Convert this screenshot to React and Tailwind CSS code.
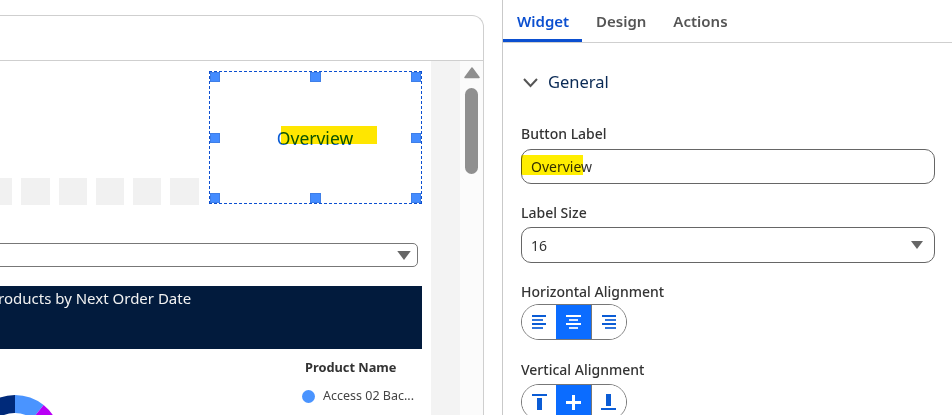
const font = { fontFamily: '"Noto Sans", "Open Sans", sans-serif' };

function Handle({ className }) {
  return <span className={`absolute h-[10px] bg-[#448cff] border border-[#3f7fe8] ${className}`} />;
}

function Caret({ className }) {
  return (
    <svg className={className} viewBox="0 0 12 8" width="12" height="8">
      <path d="M0 0H12L6 8Z" fill="#666" />
    </svg>
  );
}

function AlignIcon({ rows, color }) {
  return (
    <svg width="15" height="14" viewBox="0 0 15 14">
      {rows.map(([x, y, w], i) => (
        <rect key={i} x={x} y={y} width={w} height="2" fill={color} opacity={i % 2 ? 0.85 : 1} />
      ))}
    </svg>
  );
}

function Segmented({ children }) {
  return (
    <div className="flex w-[106px] h-[36px] rounded-full border border-[#777] overflow-hidden">
      {children}
    </div>
  );
}

function Seg({ active, border, children }) {
  return (
    <div className={`flex-1 flex items-center justify-center ${active ? 'bg-[#0b6cff]' : 'bg-white'} ${border ? 'border-l border-[#777]' : ''}`}>
      {children}
    </div>
  );
}

export default function App() {
  return (
    <div className="flex w-[952px] h-[415px] overflow-hidden bg-white" style={font}>
      {/* builder canvas */}
      <div className="w-[503px] h-full shrink-0 border-r border-[#c9c9c9] pt-[15px] pr-[18px]">
        <div className="h-[440px] border-t border-r border-[#cfcfcf] rounded-tr-xl">
          <div className="h-[45px] border-b border-[#cfcfcf]" />
          <div className="flex h-full">
            <div className="w-[431px] shrink-0 overflow-hidden pt-[10px]">
              <div className="flex justify-end items-end gap-[10px] pr-[9px]">
                <div className="flex gap-[9px] mb-[-1px]">
                  {[29, 29, 28, 28, 28, 29].map((w, i) => (
                    <div key={i} className="h-[27px] bg-[#f1f1f1] shrink-0" style={{ width: w }} />
                  ))}
                </div>
                <div className="relative w-[213px] h-[133px] shrink-0 border border-dashed border-[#0b4fd0] flex items-center justify-center">
                  <Handle className="w-[10px] left-0 top-0" />
                  <Handle className="w-[11px] left-[100px] top-0" />
                  <Handle className="w-[10px] right-0 top-0" />
                  <Handle className="w-[10px] left-0 top-[61px]" />
                  <Handle className="w-[10px] right-0 top-[61px]" />
                  <Handle className="w-[10px] left-0 bottom-0" />
                  <Handle className="w-[11px] left-[100px] bottom-0" />
                  <Handle className="w-[10px] right-0 bottom-0" />
                  <span className="text-[17.5px] leading-[22px] text-[#0b5cd5] mr-[1px]">Overview</span>
                  <span className="absolute left-[71px] top-[54px] w-[96px] h-[18px] bg-[#ffe600] mix-blend-multiply" />
                </div>
              </div>

              <div className="mt-[39px] mr-[13px] ml-[-8px] h-[24px] rounded-r-[5px] border border-[#777] flex items-center justify-end pr-[5px]">
                <Caret className="w-[16px] h-[9px]" />
              </div>

              <div className="mt-[19px] mr-[9px] h-[63px] bg-[#021b3d] text-[#f2f2f2] text-[15px] leading-[24px] ml-[-11px] whitespace-nowrap">
                Products by Next Order Date
              </div>

              <div className="flex justify-between mt-[9px] pr-[17px]">
                <svg width="60" height="30" viewBox="0 0 60 30" className="mt-[37px] shrink-0">
                  <path d="M15 0A46 46 0 0 1 43.6 10L32.4 24A28 28 0 0 0 15 18Z" fill="#4a94ff" />
                  <path d="M43.6 10A46 46 0 0 1 56 25.5L40 33A28 28 0 0 0 32.4 24Z" fill="#b800f5" />
                  <path d="M0 2.5A46 46 0 0 1 15 0V18A28 28 0 0 0 0 22Z" fill="#002a7a" />
                </svg>
                <div className="w-[112px]">
                  <div className="text-[12.8px] leading-[18px] font-bold text-[#333] pl-[3px]">Product Name</div>
                  <div className="flex items-center gap-[8px] mt-[11px] text-[12.5px] leading-[18px] text-[#444]">
                    <span className="w-[13px] h-[13px] rounded-full bg-[#4a94ff] shrink-0" />
                    <span className="whitespace-nowrap">Access 02 Bac...</span>
                  </div>
                </div>
              </div>
            </div>

            <div className="w-[29px] shrink-0 bg-[#f3f3f3]" />
            <div className="flex-1 bg-[#fbfbfb] flex flex-col items-center pt-[6px]">
              <svg width="16" height="12" viewBox="0 0 16 12">
                <path d="M8 1L15 10.5H1Z" fill="#8f8f8f" stroke="#8f8f8f" strokeWidth="1.5" strokeLinejoin="round" />
              </svg>
              <div className="w-[13px] h-[86px] rounded-full bg-[#8f8f8f] mt-[9px]" />
            </div>
          </div>
        </div>
      </div>

      {/* properties panel */}
      <div className="flex-1 min-w-0">
        <div className="h-[43px] border-b border-[#cfcfcf] flex text-[15px] font-semibold text-[#555]">
          <div className="w-[79px] h-[42px] border-b-[3px] border-[#0b4fd0] text-[#0b4fd0] pl-[14px] pt-[9px] leading-[24px]">Widget</div>
          <div className="ml-[14px] pt-[9px] leading-[24px]">Design</div>
          <div className="ml-[27px] pt-[9px] leading-[24px]">Actions</div>
        </div>

        <div className="px-[18px] pr-[17px]">
          <div className="flex items-center mt-[26px] h-[26px] pl-[2px]">
            <svg width="15" height="11" viewBox="0 0 15 11" fill="none">
              <path d="M1 2L7.5 9L14 2" stroke="#555" strokeWidth="2" />
            </svg>
            <span className="ml-[10px] text-[16.5px] leading-[26px] text-[#0a2a55]">General</span>
          </div>

          <div className="mt-[29px] text-[14px] leading-[20px] font-medium text-[#333]">Button Label</div>
          <div className="relative mt-[5px] h-[35px] rounded-[10px] border border-[#666] flex items-center pl-[9px] text-[14px] text-[#333]">
            Overview
            <span className="absolute left-[-1px] top-[5px] w-[62px] h-[20px] bg-[#ffee00] mix-blend-multiply rounded-l-[2px]" />
          </div>

          <div className="mt-[19px] text-[14px] leading-[20px] font-medium text-[#333]">Label Size</div>
          <div className="mt-[4px] h-[36px] rounded-[10px] border border-[#666] flex items-center justify-between pl-[9px] pr-[11px] text-[14px] text-[#333]">
            16
            <Caret />
          </div>

          <div className="mt-[19px] mb-[2px] text-[14px] leading-[20px] font-medium text-[#333]">Horizontal Alignment</div>
          <Segmented>
            <Seg>
              <AlignIcon color="#0b5cd5" rows={[[0, 0, 14], [0, 4, 11], [0, 8, 14], [0, 12, 11]]} />
            </Seg>
            <Seg active>
              <AlignIcon color="#fff" rows={[[0, 0, 15], [3, 4, 9], [0, 8, 15], [3, 12, 9]]} />
            </Seg>
            <Seg border>
              <AlignIcon color="#0b5cd5" rows={[[1, 0, 14], [4, 4, 11], [1, 8, 14], [4, 12, 11]]} />
            </Seg>
          </Segmented>

          <div className="mt-[20px] mb-[4px] text-[14px] leading-[20px] font-medium text-[#333]">Vertical Alignment</div>
          <Segmented>
            <Seg>
              <svg width="15" height="16" viewBox="0 0 15 16">
                <path d="M0 0H15V2H0Z M5 4H10V16H5Z" fill="#0b5cd5" />
              </svg>
            </Seg>
            <Seg active>
              <svg width="15" height="15" viewBox="0 0 15 15">
                <path d="M6 0H9V6H15V9H9V15H6V9H0V6H6Z" fill="#fff" />
              </svg>
            </Seg>
            <Seg border>
              <svg width="15" height="16" viewBox="0 0 15 16">
                <path d="M5 0H10V12H5Z M0 14H15V16H0Z" fill="#0b5cd5" />
              </svg>
            </Seg>
          </Segmented>
        </div>
      </div>
    </div>
  );
}
